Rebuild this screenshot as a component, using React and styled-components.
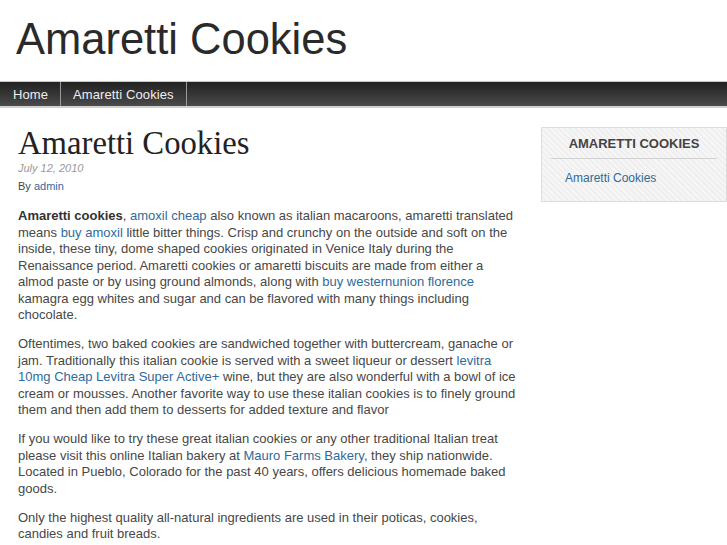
import React from 'react';
import styled, { createGlobalStyle } from 'styled-components';

// STYLES

const GlobalStyle = createGlobalStyle`
  html, body {
    margin: 0;
    padding: 0;
    background: #fff;
  }
  body {
    font-family: "Liberation Sans", Arial, sans-serif;
    color: #444;
  }
  a {
    color: #2f6a9c;
    text-decoration: none;
  }
`;

const Page = styled.div`
  width: 727px;
  height: 545px;
  overflow: hidden;
`;

const Header = styled.header`
  height: 81px;
  padding: 0 0 0 16px;
  display: flex;
  align-items: center;

  h1 {
    margin: 0 0 2px;
    font-size: 43.5px;
    font-weight: normal;
    color: #2a2a2a;
    line-height: 1;
  }
`;

const NavBar = styled.nav`
  display: flex;
  height: 24px;
  border-top: 1px solid #c8c8c8;
  border-bottom: 2px solid #d0d0d0;
  background: linear-gradient(to bottom, #232323 0%, #333 45%, #4a4a4a 100%);
`;

const NavItem = styled.a`
  display: flex;
  align-items: center;
  padding: 0 12px 0 ${(props) => (props.$first ? '13px' : '12px')};
  font-size: 13px;
  color: #eee;
  border-right: 1px solid #9a9a9a;
  letter-spacing: 0.1px;
`;

const Main = styled.div`
  display: flex;
  align-items: flex-start;
  padding: 0 0 0 18px;
  gap: 23px;
`;

const Content = styled.article`
  width: 500px;
  flex-shrink: 0;
`;

const PostTitle = styled.h2`
  margin: 17px 0 0;
  font-family: "Liberation Serif", "Times New Roman", serif;
  font-weight: normal;
  font-size: 32.7px;
  line-height: 36px;
  color: #222;
`;

const PostDate = styled.div`
  font-size: 11px;
  font-style: italic;
  color: #999;
  line-height: 14px;
`;

const Byline = styled.div`
  font-size: 11px;
  color: #444;
  line-height: 14px;
  margin-top: 4px;
`;

const Body = styled.div`
  margin-top: 15px;

  p {
    margin: 0 0 12.5px;
    font-size: 13px;
    line-height: 16.5px;
    color: #474747;
  }

  strong {
    color: #333;
  }
`;

const Sidebar = styled.aside`
  width: 170px;
  margin-top: 19px;
  border: 1px solid #ddd;
  background: repeating-linear-gradient(
    45deg,
    #f6f6f6 0px,
    #f6f6f6 2px,
    #efefef 2px,
    #efefef 4px
  );
  padding: 8px 9px 16px;
`;

const WidgetTitle = styled.h3`
  margin: 0;
  padding: 0 0 7px;
  font-size: 13px;
  line-height: 15px;
  font-weight: bold;
  text-align: center;
  color: #444;
  border-bottom: 1px solid #d2d2d2;
`;

const WidgetLink = styled.a`
  display: block;
  margin: 12px 0 0 14px;
  font-size: 12px;
  line-height: 14px;
`;

// COMPONENT

const App = () => {
  return (
    <Page>
      <GlobalStyle />
      <Header>
        <h1>Amaretti Cookies</h1>
      </Header>
      <NavBar>
        <NavItem href="#" $first>Home</NavItem>
        <NavItem href="#">Amaretti Cookies</NavItem>
      </NavBar>
      <Main>
        <Content>
          <PostTitle>Amaretti Cookies</PostTitle>
          <PostDate>July 12, 2010</PostDate>
          <Byline>
            By <a href="#">admin</a>
          </Byline>
          <Body>
            <p>
              <strong>Amaretti cookies</strong>, <a href="#">amoxil cheap</a> also known as italian
              macaroons, amaretti translated means <a href="#">buy amoxil</a> little bitter things.
              Crisp and crunchy on the outside and soft on the inside, these tiny, dome shaped
              cookies originated in Venice Italy during the Renaissance period. Amaretti cookies or
              amaretti biscuits are made from either a almod paste or by using ground almonds, along
              with <a href="#">buy westernunion florence</a> kamagra egg whites and sugar and can be
              flavored with many things including chocolate.
            </p>
            <p>
              Oftentimes, two baked cookies are sandwiched together with buttercream, ganache or
              jam. Traditionally this italian cookie is served with a sweet liqueur or dessert{' '}
              <a href="#">levitra 10mg Cheap Levitra Super Active+</a> wine, but they are also
              wonderful with a bowl of ice cream or mousses. Another favorite way to use these
              italian cookies is to finely ground them and then add them to desserts for added
              texture and flavor
            </p>
            <p>
              If you would like to try these great italian cookies or any other traditional Italian
              treat please visit this online Italian bakery at <a href="#">Mauro Farms Bakery</a>,
              they ship nationwide. Located in Pueblo, Colorado for the past 40 years, offers
              delicious homemade baked goods.
            </p>
            <p>
              Only the highest quality all-natural ingredients are used in their poticas, cookies,
              candies and fruit breads.
              <br />
              They use both sweet butter and cream from a local farm <a href="#">cheap viagra</a> and
              fresh eggs.
            </p>
          </Body>
        </Content>
        <Sidebar>
          <WidgetTitle>AMARETTI COOKIES</WidgetTitle>
          <WidgetLink href="#">Amaretti Cookies</WidgetLink>
        </Sidebar>
      </Main>
    </Page>
  );
};

// EXPORT

export default App;
